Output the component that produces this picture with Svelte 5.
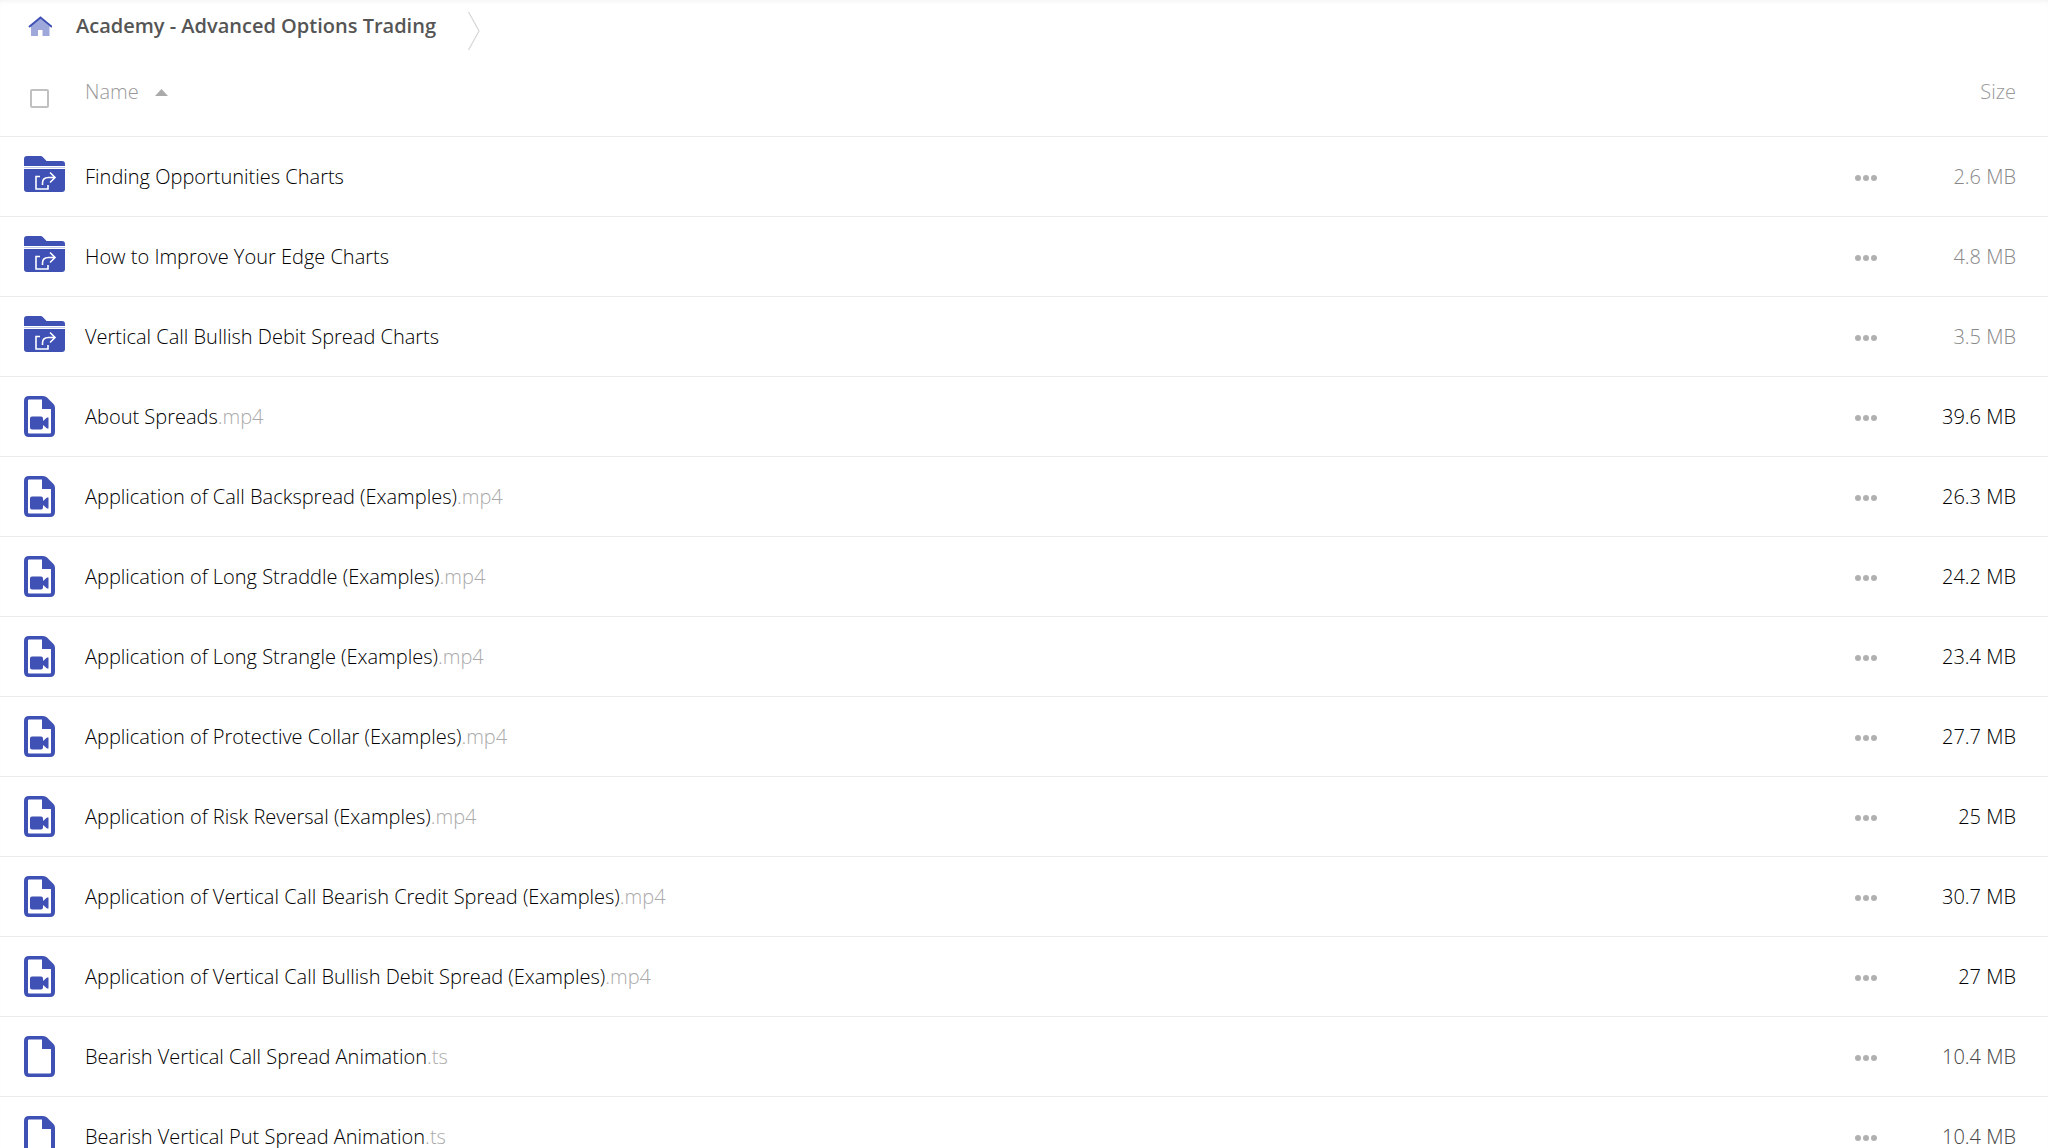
<script lang="ts">
	// Public share file list: breadcrumb on top, sortable table of folders and files below.
	type Kind = 'folder' | 'video' | 'file';
	type Entry = { name: string; ext?: string; kind: Kind; size: string; tone: string };

	const examples = (topic: string, size: string): Entry => ({
		name: `Application of ${topic} (Examples)`,
		ext: '.mp4',
		kind: 'video',
		size,
		tone: 'large'
	});

	const entries: Entry[] = [
		{ name: 'Finding Opportunities Charts', kind: 'folder', size: '2.6 MB', tone: 'small' },
		{ name: 'How to Improve Your Edge Charts', kind: 'folder', size: '4.8 MB', tone: 'small' },
		{ name: 'Vertical Call Bullish Debit Spread Charts', kind: 'folder', size: '3.5 MB', tone: 'small' },
		{ name: 'About Spreads', ext: '.mp4', kind: 'video', size: '39.6 MB', tone: 'large' },
		examples('Call Backspread', '26.3 MB'),
		examples('Long Straddle', '24.2 MB'),
		examples('Long Strangle', '23.4 MB'),
		examples('Protective Collar', '27.7 MB'),
		examples('Risk Reversal', '25 MB'),
		examples('Vertical Call Bearish Credit Spread', '30.7 MB'),
		examples('Vertical Call Bullish Debit Spread', '27 MB'),
		{ name: 'Bearish Vertical Call Spread Animation', ext: '.ts', kind: 'file', size: '10.4 MB', tone: 'medium' },
		{ name: 'Bearish Vertical Put Spread Animation', ext: '.ts', kind: 'file', size: '10.4 MB', tone: 'medium' }
	];

	let allSelected = $state(false);
	let ascending = $state(true);
	let rows = $derived(ascending ? entries : [...entries].reverse());
</script>

<main class="files">
	<nav class="crumbs" aria-label="Breadcrumb">
		<a href="#home" class="home" aria-label="Home">
			<svg width="24" height="20" viewBox="0 0 24 20">
				<path d="M3 10 12 2l9.500 8V20H14.500v-6H10v6H3z" fill="#9fa8da" />
				<path d="M1 11 12.500 1.500 24 11" fill="none" stroke="#3f51b5" stroke-width="2" />
			</svg>
		</a>
		<a href="#folder" class="crumb">Academy - Advanced Options Trading</a>
		<svg class="chevron" width="12" height="38" viewBox="0 0 12 38">
			<path d="M.5 0 11 19 .5 38" fill="none" stroke="#d6d6d6" stroke-width="1.2" />
		</svg>
	</nav>

	<table>
		<thead>
			<tr>
				<th class="icon-col">
					<input type="checkbox" aria-label="Select all" bind:checked={allSelected} />
				</th>
				<th class="name-col">
					<button class="sort" onclick={() => (ascending = !ascending)}>
						Name
						<svg class:flipped={!ascending} width="13" height="7" viewBox="0 0 13 7">
							<path d="M0 7 6.500 0 13 7z" fill="#aaa" />
						</svg>
					</button>
				</th>
				<th class="menu-col"></th>
				<th class="size-col">Size</th>
			</tr>
		</thead>
		<tbody>
			{#each rows as entry (entry.name)}
				<tr>
					<td class="icon-col">
						<svg width="41" height="41" viewBox="0 0 41 41" fill="#3f51b5">
							{#if entry.kind === 'folder'}
								<path d="M3 0h13.500q1.500 0 2.500 1.200L22.500 5H38q3 0 3 3v2H0V3q0-3 3-3z" />
								<path d="M0 11h41v1H0z" fill="#c5cae9" />
								<path d="M0 13h41v20q0 3-3 3H3q-3 0-3-3z" />
								<path
									d="M16 20.500h-4v12.500h12v-4M18.500 29v-2q0-5.500 6-5.500h6M26 16.500l5 5-5 5"
									fill="none"
									stroke="#fff"
									stroke-width="1.600"
								/>
							{:else}
								<path
									fill-rule="evenodd"
									d="M5 0h14q2.500 0 4 1.500l6.500 6.500q1.500 1.500 1.500 4v24q0 5-5 5H5q-5 0-5-5V5q0-5 5-5zM5 3.500Q4 3.500 4 4.500v32q0 1 1 1h21q1 0 1-1V13h-9V3.500z"
								/>
								{#if entry.kind === 'video'}
									<path d="M8 20.500h9q2 0 2 2V25l4-3.500h1.500v11H23L19 29v2.500q0 2-2 2H8q-2 0-2-2v-9q0-2 2-2z" />
								{/if}
							{/if}
						</svg>
					</td>
					<td class="name-col">
						<a href="#{entry.name}">{entry.name}{#if entry.ext}<span class="ext">{entry.ext}</span>{/if}</a>
					</td>
					<td class="menu-col">
						<button class="menu" aria-label="Actions for {entry.name}">
							<svg width="22" height="6" viewBox="0 0 22 6" fill="#b0b0b0">
								<circle cx="3" cy="3" r="3" />
								<circle cx="11" cy="3" r="3" />
								<circle cx="19" cy="3" r="3" />
							</svg>
						</button>
					</td>
					<td class="size-col {entry.tone}">{entry.size}</td>
				</tr>
			{/each}
		</tbody>
	</table>
</main>

<style>
	:global(body) {
		background: #fff;
	}
	.files {
		height: 100vh;
		overflow-y: auto;
		scrollbar-width: none;
		box-shadow: inset 0 4px 6px -4px rgba(0, 0, 0, 0.08);
		font-family: 'Open Sans', sans-serif;
		font-size: 20px;
		font-weight: 300;
		line-height: 28px;
		color: #000;
	}
	a {
		color: inherit;
		text-decoration: none;
	}
	svg {
		display: block;
	}
	button {
		border: 0;
		padding: 0;
		background: none;
		font: inherit;
		color: inherit;
		cursor: pointer;
	}

	.crumbs {
		display: flex;
		align-items: flex-start;
		box-sizing: border-box;
		height: 52px;
		padding: 12px 28px 0;
	}
	.home {
		padding-top: 4px;
		margin-right: 24px;
	}
	.crumb {
		font-weight: 600;
		color: #555;
	}
	.chevron {
		margin-left: 32px;
	}

	table {
		width: 100%;
		border-collapse: separate;
		border-spacing: 0;
	}
	th,
	td {
		box-sizing: border-box;
		height: 80px;
		padding: 0;
		border-bottom: 1px solid #ebebeb;
		text-align: left;
	}
	th {
		height: 85px;
		padding-top: 26px;
		vertical-align: top;
		font-weight: 300;
		color: #999;
	}
	.icon-col {
		width: 85px;
		padding-left: 24px;
	}
	input {
		display: block;
		appearance: none;
		box-sizing: border-box;
		width: 19px;
		height: 19px;
		margin: 11px 0 0 6px;
		border: 2px solid #c0c0c0;
		border-radius: 2px;
	}
	input:checked {
		background: #3f51b5;
		border-color: #3f51b5;
	}
	.sort {
		display: flex;
		align-items: center;
		gap: 16px;
	}
	.flipped {
		transform: rotate(180deg);
	}
	.ext {
		color: #aaa;
	}
	.menu-col {
		width: 40px;
	}
	.menu {
		display: block;
		padding: 12px 8px 10px;
	}
	.size-col {
		width: 161px;
		padding-right: 32px;
		text-align: right;
	}
	.small {
		color: #888;
	}
	.medium {
		color: #444;
	}
	.large {
		color: #000;
	}
</style>
